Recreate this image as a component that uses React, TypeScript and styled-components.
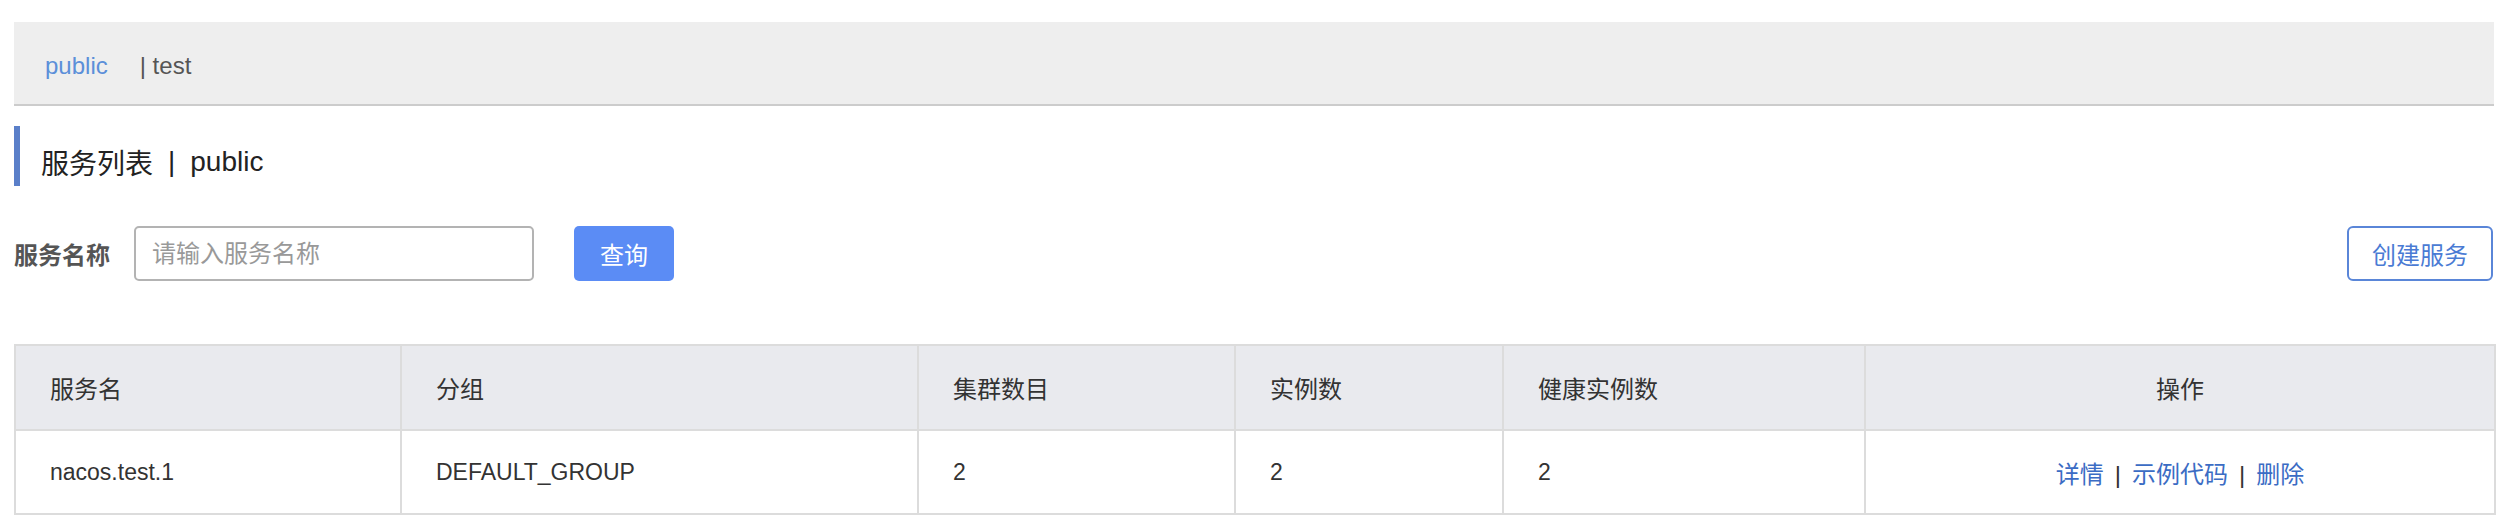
import React from "react";
import styled, { createGlobalStyle } from "styled-components";

const GlobalStyle = createGlobalStyle`
  body {
    margin: 0;
    background: #fff;
    font-family: "Liberation Sans", "Noto Sans CJK SC", sans-serif;
    color: #333;
  }
`;

const columns = [
  { title: "服务名", width: 386 },
  { title: "分组", width: 517 },
  { title: "集群数目", width: 317 },
  { title: "实例数", width: 268 },
  { title: "健康实例数", width: 362 },
  { title: "操作", width: 630, center: true },
];

const services = [
  {
    name: "nacos.test.1",
    group: "DEFAULT_GROUP",
    clusters: 2,
    instances: 2,
    healthy: 2,
  },
];

const App: React.FC = () => {
  return (
    <Page>
      <GlobalStyle />
      <NamespaceBar>
        <NamespaceActive>public</NamespaceActive>
        <NamespaceItem>| test</NamespaceItem>
      </NamespaceBar>

      <PageTitle>
        服务列表<TitleSep>|</TitleSep>public
      </PageTitle>

      <SearchRow>
        <FieldLabel>服务名称</FieldLabel>
        <SearchInput placeholder="请输入服务名称" />
        <PrimaryButton>查询</PrimaryButton>
        <Spacer />
        <OutlineButton>创建服务</OutlineButton>
      </SearchRow>

      <Table>
        <colgroup>
          {columns.map((col) => (
            <col key={col.title} style={{ width: col.width }} />
          ))}
        </colgroup>
        <thead>
          <tr>
            {columns.map((col) => (
              <HeadCell key={col.title} $center={col.center}>
                {col.title}
              </HeadCell>
            ))}
          </tr>
        </thead>
        <tbody>
          {services.map((s) => (
            <tr key={s.name}>
              <Cell>{s.name}</Cell>
              <Cell>{s.group}</Cell>
              <Cell>{s.clusters}</Cell>
              <Cell>{s.instances}</Cell>
              <Cell>{s.healthy}</Cell>
              <Cell $center>
                <Actions>
                  <ActionLink>详情</ActionLink>
                  <ActionSep>|</ActionSep>
                  <ActionLink>示例代码</ActionLink>
                  <ActionSep>|</ActionSep>
                  <ActionLink>删除</ActionLink>
                </Actions>
              </Cell>
            </tr>
          ))}
        </tbody>
      </Table>
    </Page>
  );
};

const Page = styled.div`
  padding: 22px 10px 0 14px;
`;

const NamespaceBar = styled.div`
  display: flex;
  align-items: center;
  box-sizing: border-box;
  height: 84px;
  padding: 5px 0 0 31px;
  background: #eeeeee;
  border-bottom: 2px solid #cccccc;
  font-size: 24px;
`;

const NamespaceActive = styled.span`
  color: #5b8fd9;
  margin-right: 32px;
`;

const NamespaceItem = styled.span`
  color: #555;
`;

const PageTitle = styled.div`
  display: flex;
  align-items: center;
  box-sizing: border-box;
  height: 60px;
  margin-top: 20px;
  padding: 12px 0 0 21px;
  border-left: 6px solid #5a7fc9;
  font-size: 28px;
  color: #222;
`;

const TitleSep = styled.span`
  margin: 0 15px;
`;

const SearchRow = styled.div`
  display: flex;
  align-items: center;
  height: 55px;
  margin-top: 40px;
`;

const FieldLabel = styled.label`
  font-size: 24px;
  font-weight: bold;
  color: #555;
  margin-right: 24px;
`;

const SearchInput = styled.input`
  box-sizing: border-box;
  width: 400px;
  height: 55px;
  padding: 0 16px;
  border: 2px solid #b3b3b3;
  border-radius: 5px;
  font-family: inherit;
  font-size: 24px;
  outline: none;

  &::placeholder {
    color: #999;
  }
`;

const PrimaryButton = styled.button`
  box-sizing: border-box;
  width: 100px;
  height: 55px;
  margin-left: 40px;
  border: none;
  border-radius: 5px;
  background: #5b8cf5;
  color: #fff;
  font-family: inherit;
  font-size: 24px;
  cursor: pointer;
`;

const Spacer = styled.div`
  flex: 1;
`;

const OutlineButton = styled.button`
  box-sizing: border-box;
  width: 146px;
  height: 55px;
  margin-right: 1px;
  border: 2px solid #5a86d8;
  border-radius: 6px;
  background: #fff;
  color: #4a7bd4;
  font-family: inherit;
  font-size: 24px;
  cursor: pointer;
`;

const Table = styled.table`
  width: 2480px;
  margin-top: 63px;
  table-layout: fixed;
  border-collapse: collapse;
  border: 2px solid #dcdcdc;
`;

const HeadCell = styled.th<{ $center?: boolean }>`
  height: 83px;
  padding: 0 0 0 ${(p) => (p.$center ? "0" : "34px")};
  background: #e9eaee;
  border: 2px solid #dcdcdc;
  font-size: 24px;
  font-weight: normal;
  color: #333;
  text-align: ${(p) => (p.$center ? "center" : "left")};
`;

const Cell = styled.td<{ $center?: boolean }>`
  height: 82px;
  padding: 0 0 0 ${(p) => (p.$center ? "0" : "34px")};
  border: 2px solid #dcdcdc;
  font-size: 23px;
  color: #333;
  text-align: ${(p) => (p.$center ? "center" : "left")};
`;

const Actions = styled.span`
  font-size: 24px;
`;

const ActionLink = styled.a`
  color: #3b6cc4;
  cursor: pointer;
`;

const ActionSep = styled.span`
  margin: 0 11px;
  color: #333;
`;

export default App;
